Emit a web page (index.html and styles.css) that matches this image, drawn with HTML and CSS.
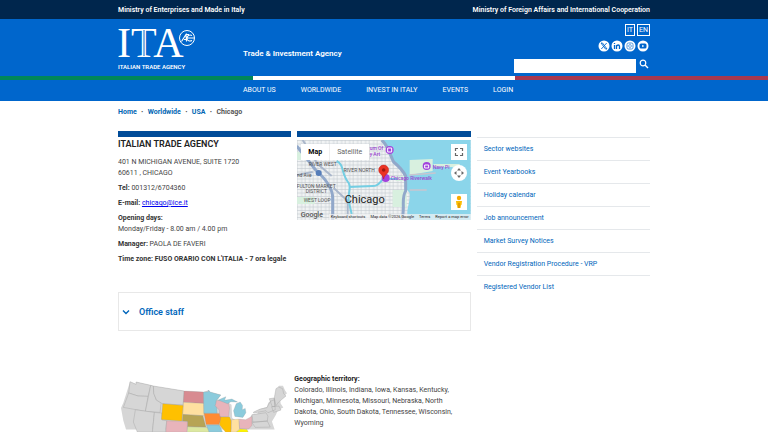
FILE: index.html
```html
<!DOCTYPE html>
<html lang="en">
<head>
<meta charset="utf-8">
<meta name="viewport" content="width=device-width, initial-scale=1">
<title>Italian Trade Agency - Chicago</title>
<link rel="stylesheet" href="styles.css">
</head>
<body>
<div class="topbar">
  <div class="wrap topbar-row">
    <a href="#">Ministry of Enterprises and Made in Italy</a>
    <a href="#">Ministry of Foreign Affairs and International Cooperation</a>
  </div>
</div>
<header class="header">
  <div class="wrap header-row">
    <a href="#" class="logo">
      <svg width="84" height="44" viewBox="0 0 84 44" role="img" aria-label="ITA Italian Trade Agency">
        <text class="logo-big" x="-1" y="30">ITA</text>
        <path d="M26 3V29" stroke="#06c" stroke-width="1"/>
        <g fill="none" stroke="#fff">
          <circle cx="69" cy="11" r="7.500" stroke-width="1"/>
          <path d="M63.500 14.500l4.500-7 .5 7M66 12.500h2.500M74 8.500c-3-1.500-5 .5-5 3 0 2.500 3 3 5 2M69 11h7M68 7.500h3" stroke-width="1.100"/>
        </g>
        <text class="logo-small" x="0" y="42">ITALIAN TRADE AGENCY</text>
      </svg>
    </a>
    <p class="tagline">Trade &amp; Investment Agency</p>
    <div class="tools">
      <div class="langs"><a href="#">IT</a><a href="#">EN</a></div>
      <div class="social">
        <a href="#" aria-label="X"><svg viewBox="0 0 12 12"><circle cx="6" cy="6" r="5.500" fill="#fff"/><path d="M3 3h1.500L9 9H7.500zM8.700 3L3.300 9" fill="none" stroke="#06c" stroke-width=".9"/></svg></a>
        <a href="#" aria-label="LinkedIn"><svg viewBox="0 0 12 12"><circle cx="6" cy="6" r="5.500" fill="#fff"/><path d="M3.500 5v4M3.500 3v1M5.500 9V5M5.500 6.500c.5-2 3-2 3 0V9" fill="none" stroke="#06c" stroke-width="1.300"/></svg></a>
        <a href="#" aria-label="Instagram"><svg viewBox="0 0 12 12"><circle cx="6" cy="6" r="5.500" fill="#fff"/><rect x="3" y="3" width="6" height="6" rx="1.500" fill="none" stroke="#4c94dc"/><circle cx="6" cy="6" r="1.400" fill="none" stroke="#4c94dc" stroke-width=".8"/></svg></a>
        <a href="#" aria-label="YouTube"><svg viewBox="0 0 12 12"><circle cx="6" cy="6" r="5.500" fill="#fff"/><rect x="2.500" y="3.500" width="7" height="5" rx="1.500" fill="#06c"/><path d="M5.200 4.800v2.400L7.300 6z" fill="#fff"/></svg></a>
      </div>
      <form class="search">
        <input type="search" aria-label="Search">
        <button type="button" aria-label="Search"><svg viewBox="0 0 10 10"><circle cx="4" cy="4" r="2.800" fill="none" stroke="#fff" stroke-width="1.200"/><path d="M6 6l3 3" stroke="#fff" stroke-width="1.400"/></svg></button>
      </form>
    </div>
  </div>
  <div class="flag"><span class="green"></span><span class="white"></span><span class="red"></span></div>
  <nav class="nav wrap">
    <a href="#">ABOUT US</a><a href="#">WORLDWIDE</a><a href="#">INVEST IN ITALY</a><a href="#">EVENTS</a><a href="#">LOGIN</a>
  </nav>
</header>
<main class="wrap">
  <nav class="crumbs" aria-label="Breadcrumb">
    <a href="#">Home</a><i>•</i><a href="#">Worldwide</a><i>•</i><a href="#">USA</a><i>•</i><span>Chicago</span>
  </nav>
  <div class="columns">
    <section class="office">
      <h1>ITALIAN TRADE AGENCY</h1>
      <p>401 N MICHIGAN AVENUE, SUITE 1720<br>60611 , CHICAGO</p>
      <p><b>Tel:</b> 001312/6704360</p>
      <p><b>E-mail:</b> <a href="#">chicago@ice.it</a></p>
      <p><b>Opening days:</b><br>Monday/Friday - 8.00 am / 4.00 pm</p>
      <p><b>Manager:</b> PAOLA DE FAVERI</p>
      <p><b>Time zone: FUSO ORARIO CON L'ITALIA - 7 ora legale</b></p>
    </section>
    <section class="map-col">
      <div class="map">
        <svg class="map-art" viewBox="0 0 174 80" preserveAspectRatio="xMidYMid slice" role="img" aria-label="Map of Chicago">
          <defs>
            <pattern id="streets" width="8" height="7" patternUnits="userSpaceOnUse"><path d="M0 .5H8M.5 0V7M5 0V7M0 4H8" stroke="#c3c9cf" stroke-width=".6"/></pattern>
          </defs>
          <path fill="#f1f3f4" d="M0 0h174v80H0z"/>
          <path fill="url(#streets)" d="M0 0h174v80H0z"/>
          <path fill="#d8f0df" d="M0 12h12v8H0zM96 50h14v17H96zM0 57h18v7H0zM99 36h8v5h-8z"/>
          <path fill="#8bd5ea" d="M85 0c7 6 9 17 12 22 5 5 9 7 11 13v12l5 6c1 12-5 16-1 27h62V0z"/>
          <path fill="#d8f0df" d="M113 20l23-1v12l-23 4zM137 24h26v3h-26z"/>
          <path fill="none" stroke="#c9c5cf" stroke-width="1.500" d="M112 35l27-2M113 50h17"/>
          <path fill="none" stroke="#91a8ca" stroke-width="3" d="M85 0c7 6 9 17 12 22 6 5 9 8 12 14v15c-5 7 0 19-4 29M0 6l19 24c9 8 17 17 17 28v22"/>
          <path fill="none" stroke="#aab7cb" stroke-width="2" d="M6 0l15 24 14 12M37 48l14 13v19M16 32L0 35"/>
          <path fill="none" stroke="#74cee3" stroke-width="2" d="M40 21c8 4 4 12 12 22 3 5-1 9 0 18l3 13M52 47l24-1c7 0 7-5 11-7h14"/>
          <circle cx="22" cy="33" r="3" fill="#557db9"/>
          <g class="place">
            <text x="12" y="26">RIVER WEST</text>
            <text x="47" y="32">RIVER NORTH</text>
            <text x="0" y="48">FULTON MARKET</text>
            <text x="9" y="53">DISTRICT</text>
            <text x="7" y="62">WEST LOOP</text>
            <text x="0" y="37">nd Ave</text>
          </g>
          <g class="poi">
            <text x="73" y="10">um Of</text>
            <text x="73" y="16">y Art</text>
            <text x="136" y="29">Navy Pi</text>
            <text x="94" y="40">Chicago Riverwalk</text>
          </g>
          <g fill="#a142dc"><circle cx="93" cy="10" r="4"/><circle cx="130" cy="26" r="4"/><circle cx="89" cy="38" r="4"/></g>
          <path fill="none" stroke="#fff" d="M91 8h4v4h-4zM128 25h4v3h-4z"/>
          <path fill="#ea3323" stroke="#b31412" stroke-width=".4" d="M87 39c-1-5-5-5-5-9a5 5 0 0 1 10 0c0 4-4 4-5 9z"/><circle cx="87" cy="30" r="1.800" fill="#9f1910"/>
          <text class="city" x="48" y="63">Chicago</text>
          <text class="google" x="4" y="77">Google</text>
        </svg>
        <div class="map-types"><button type="button" class="on">Map</button><button type="button">Satellite</button></div>
        <div class="map-controls">
          <button type="button" aria-label="Full screen"><svg viewBox="0 0 16 16"><path d="M4.500 7V4.500H7M9 4.500h2.500V7M11.500 9v2.500H9M7 11.500H4.500V9" fill="none" stroke="#666" stroke-width="1.200"/></svg></button>
          <button type="button" class="round" aria-label="Camera controls"><svg viewBox="0 0 16 16"><path d="M8 3l2 2.500H6zM8 13l2-2.500H6zM3 8l2.500-2v4zM13 8l-2.500-2v4z" fill="#666"/></svg></button>
          <button type="button" class="pegman" aria-label="Street view"><svg viewBox="0 0 16 16"><circle cx="8" cy="4" r="2.200" fill="#f9ab00"/><path d="M5 7h6l-.5 4H10l-.5 3h-3L6 11h-.5z" fill="#fbbc04"/><path d="M8 9v5" stroke="#c98000"/></svg></button>
        </div>
        <div class="map-legal"><span>Keyboard shortcuts</span><span>Map data ©2026 Google</span><span>Terms</span><span>Report a map error</span></div>
      </div>
    </section>
    <aside>
      <ul class="links">
        <li><a href="#">Sector websites</a></li>
        <li><a href="#">Event Yearbooks</a></li>
        <li><a href="#">Holiday calendar</a></li>
        <li><a href="#">Job announcement</a></li>
        <li><a href="#">Market Survey Notices</a></li>
        <li><a href="#">Vendor Registration Procedure - VRP</a></li>
        <li><a href="#">Registered Vendor List</a></li>
      </ul>
    </aside>
    <div class="lower">
      <button type="button" class="staff" aria-expanded="false">
        <svg viewBox="0 0 8 8"><path d="M1 2.500l3 3 3-3" fill="none" stroke="#06b" stroke-width="1.400"/></svg>Office staff
      </button>
      <section class="territory">
        <svg class="usa" viewBox="24 30 528 156" role="img" aria-label="Map of the office's states">
          <path fill="#d6d6d6" d="M60 35l18 8v-7l62 14 82 13 58 3 16-6 4 6 32 8-10 16 26 4 16 10 2 40 16 10 32-3 10-16 18-5 4-12 24-8 4-12 16-10 8-12-1-12 9-17h12l6 14 6 9-6 6-14 12 1 12 8 12-16 8-6 14-12 20 8 24H48l-8-26-7-38 7-16z"/>
          <g fill="#d6d6d6" stroke="#a2a2a2" stroke-width="1.200">
            <path d="M60 35l18 8v-7l44 10-8 33-30-1-28-9z"/>
            <path d="M56 69l28 9 30 1-8 45-66-12z"/>
            <path d="M122 46l8 2 1 22 8 20 14 8-3 29-44-3z"/>
            <path d="M130 48l92 15-3 42-62-4-18-11-8-20z"/>
            <path d="M76 119l57 8-6 59H82l-12-30z"/>
            <path d="M133 127l22 2 1 21 14 2-4 34h-39z"/>
            <path d="M425 134l42-6 6 10-2 15-43 4zM430 126l20-9 20-4 10-19 12-5 3 30-22 9-6-6-37 7zM477 86l15-2 2 25-8 1zM492 84l5-28 8-5 12 5 3 15 7 7-22 18-8 11zM484 110l22-2 6 12-22 7zM424 156l47-3 9 18-45 1z"/>
          </g>
          <g stroke="#8b8b8b" stroke-width=".7">
            <path fill="#d88b91" d="M222 63l58 3 1 34-61-3z"/>
            <path fill="#ffe0a0" d="M220 97l61 3 1 37-64-4z"/>
            <path fill="#b7a455" d="M218 133l60 4 9 34-55-1v-16l-15-1z"/>
            <path fill="#ffc000" d="M158 101l61 5-4 47-61-5z"/>
            <path fill="#e8b4bb" d="M170 152l62 3-1 31h-64z"/>
            <path fill="#dce8a1" d="M232 170l60 2 5 14h-65z"/>
            <path fill="#8bcbdc" d="M280 66l14-1 1-5 5 6 32 9-14 17 3 38h-40z"/>
            <path fill="#ff8b32" d="M282 130h46l6 17-8 16h-38z"/>
            <path fill="#8bcbdc" d="M289 165h38l10 21h-40z"/>
            <path fill="#e8b4bb" d="M319 92l16-2 20 9 3 15-3 26-26-1-2-19-12-13z"/>
            <path fill="#8bcbdc" d="M324 90l23-10-4 11 22-4 17 9-20-1-10 6zM374 139l-4-17 8-21 12-5 7 10-1 13 9-4 2 13-9 14z"/>
            <path fill="#ffc000" d="M332 141h26l5 12v33h-17l-18-22z"/>
            <path fill="#ffe0a0" d="M364 149l22-2 2 30-10 9h-15z"/>
            <path fill="#e8b4bb" d="M387 147l19 2 19-10v27l-10 11-27-2z"/>
            <path fill="#fff500" d="M378 186l12-9 20 1 4 8z"/>
          </g>
        </svg>
        <p><b>Geographic territory:</b><br>Colorado, Illinois, Indiana, Iowa, Kansas, Kentucky, Michigan, Minnesota, Missouri, Nebraska, North Dakota, Ohio, South Dakota, Tennessee, Wisconsin, Wyoming</p>
      </section>
    </div>
  </div>
</main>
</body>
</html>
```
FILE: styles.css
```css
* { box-sizing: border-box; }
body { margin: 0; background: #fff; color: #444; font: 7px/12px Roboto, "Open Sans", sans-serif; }
a { color: #0066b3; text-decoration: none; }
button { margin: 0; padding: 0; border: 0; background: none; font: inherit; color: inherit; cursor: pointer; }
p, h1, ul { margin: 0; padding: 0; }
svg { display: block; }
.wrap { width: calc(100% - 236px); margin: 0 auto; }

.topbar { background: #00264d; }
.topbar-row { display: flex; justify-content: space-between; padding: 4px 0 3px; }
.topbar a { color: #fff; font-weight: 600; }

.header { background: #06c; color: #fff; }
.header a { color: #fff; }
.header-row { display: grid; grid-template-columns: 125px 1fr auto; height: 57px; }
.logo { padding-top: 8px; }
.logo svg { overflow: visible; }
.logo-big { font: 42px "Liberation Serif", serif; fill: #fff; }
.logo-small { font: 600 6px Roboto, sans-serif; fill: #fff; }
.tagline { align-self: end; padding-bottom: 16px; font-size: 8px; font-weight: 600; }
.tools { display: flex; flex-direction: column; align-items: flex-end; padding-top: 5px; }
.langs { display: flex; gap: 2px; }
.langs a { padding: 0 1px; border: 1px solid #fff; line-height: 10px; }
.social { display: flex; gap: 1px; padding: 4px 1px; }
.social svg { width: 12px; height: 12px; }
.search { display: flex; gap: 3px; padding-right: 1px; }
.search input { width: 122px; height: 14px; margin-top: 3px; padding: 0 4px; border: 0; border-radius: 0; background: #fff; font: inherit; }
.search button { width: 10px; height: 10px; margin-top: 3px; }
.flag { display: grid; grid-template-columns: 33fr 34fr 33fr; height: 4px; }
.green { background: #008758; }
.white { background: #fff; }
.red { background: #a63950; }
.nav { display: flex; gap: 25px; padding: 4px 0 5px 125px; }

.crumbs { display: flex; padding: 5px 0 13px; color: #555; font-weight: 700; }
.crumbs i { width: 11px; text-align: center; font-style: normal; font-size: 5px; }
.columns { display: grid; grid-template-columns: repeat(3, 1fr); column-gap: 6px; }
.office::before, .map-col::before { content: ""; display: block; height: 6px; background: #004c99; }
.office h1 { margin-bottom: 6px; padding-top: 1px; color: #222; font-size: 9px; font-weight: 600; line-height: 13px; }
.office p { margin-bottom: 4px; line-height: 11px; }
.office p b { color: #333; }
.office p a { color: #00e; text-decoration: underline; }

.map { position: relative; height: 80px; margin-top: 3px; overflow: hidden; }
.map-art { width: 100%; height: 100%; }
.place { font: 5px Roboto, sans-serif; fill: #555; }
.poi { font: 500 5px Roboto, sans-serif; fill: #9b45d1; }
.city { font: 11px Roboto, sans-serif; fill: #222; }
.google { font: 500 7px Roboto, sans-serif; fill: #555; }
.map-types { position: absolute; top: 4px; left: 4px; display: flex; background: #fff; }
.map-types button { padding: 0 7px; color: #666; line-height: 16px; }
.map-types .on { color: #000; font-weight: 700; border-right: 1px solid #eee; }
.map-controls { position: absolute; top: 4px; right: 4px; display: grid; row-gap: 5px; }
.map-controls button { width: 16px; height: 16px; background: #fff; }
.map-controls .round { border-radius: 50%; }
.map-controls .pegman { margin-top: 8px; }
.map-legal { position: absolute; right: 0; bottom: 0; display: flex; gap: 5px; padding: 0 2px; background: #f5f5f5b0; color: #222; font-size: 4px; line-height: 6px; white-space: nowrap; }

aside { grid-row: span 2; }
.links { margin-top: 6px; list-style: none; }
.links li { padding: 5px 7px; border-top: 1px solid #e5e8eb; }
.links a { color: #06b; }

.lower { grid-column: span 2; padding-top: 23px; }
.staff { display: flex; align-items: center; gap: 9px; width: 100%; height: 39px; padding-left: 3px; border: 1px solid #e8e8e8; color: #06b; font-size: 9px; font-weight: 600; }
.staff svg { width: 8px; height: 8px; }
.territory { display: grid; grid-template-columns: 1fr 1fr; padding-top: 43px; }
.territory .usa { width: 100%; margin-top: 6px; }
.territory p { padding-right: 12px; line-height: 11px; }
.territory b { color: #222; }
```
